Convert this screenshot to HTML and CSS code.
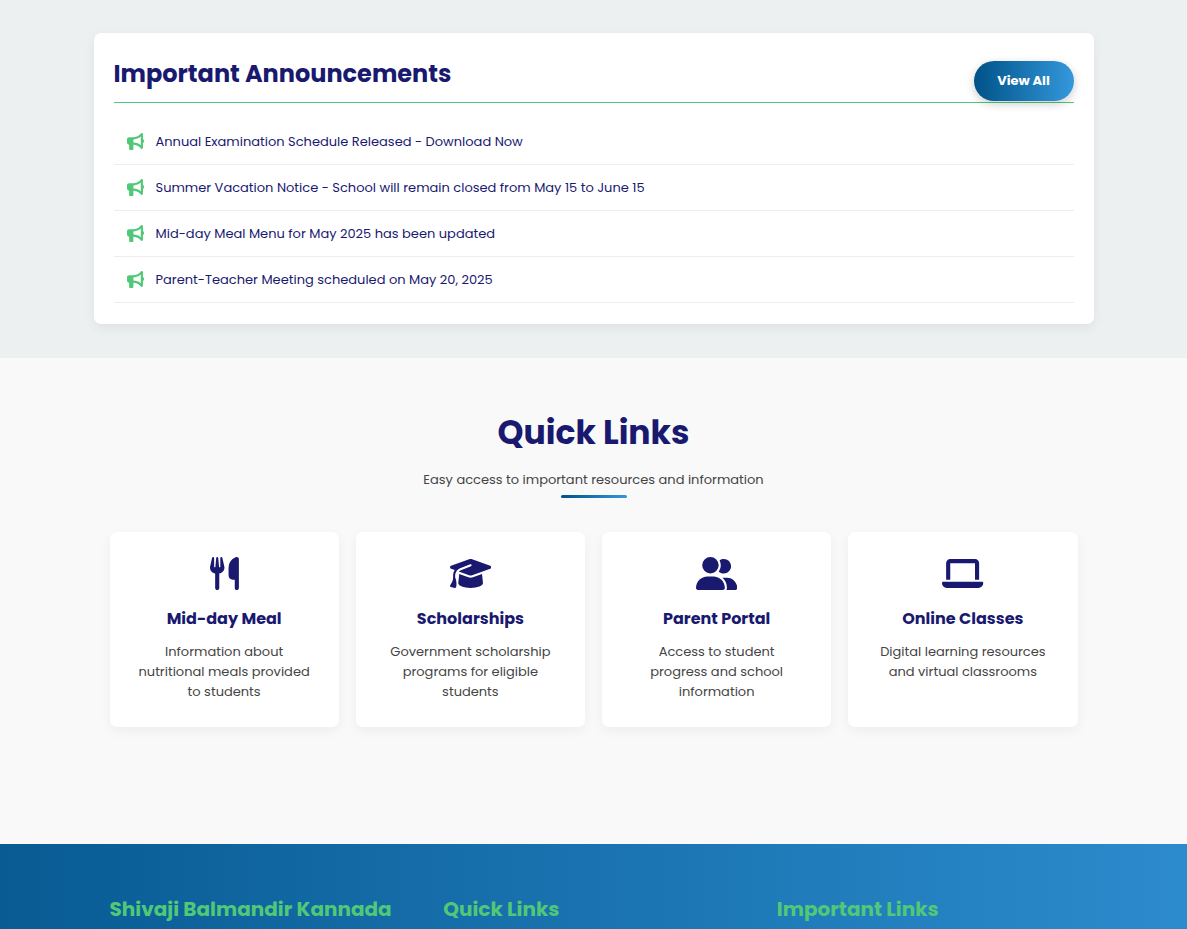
FILE: index.html
```html
<!DOCTYPE html>
<html lang="en">
<head>
<meta charset="utf-8">
<meta name="viewport" content="width=device-width, initial-scale=1">
<title>Shivaji Balmandir Kannada</title>
<link rel="stylesheet" href="styles.css">
</head>
<body>
<svg class="sprite" aria-hidden="true">
  <symbol id="bullhorn" viewBox="0 0 512 512"><path d="M480 32c0-12.9-7.8-24.6-19.8-29.6s-25.7-2.2-34.9 6.9L381.7 53c-48 48-113.1 75-181 75H192 160 64c-35.3 0-64 28.7-64 64v96c0 35.3 28.7 64 64 64l0 128c0 17.7 14.3 32 32 32h64c17.7 0 32-14.3 32-32V352l8.7 0c67.9 0 133 27 181 75l43.6 43.6c9.2 9.2 22.9 11.9 34.9 6.9s19.8-16.6 19.8-29.6V300.4c18.6-8.8 32-32.5 32-60.4s-13.4-51.6-32-60.4V32zm-64 76.7V240 371.3C357.2 317.8 280.5 288 200.7 288H192V192h8.7c79.8 0 156.5-29.8 215.3-83.3z"/></symbol>
</svg>
<section class="announcements">
  <div class="board">
    <header class="board-head">
      <h2 class="board-title">Important Announcements</h2>
      <a class="button" href="#all">View All</a>
    </header>
    <ul class="notices">
      <li class="notice"><svg class="notice-icon" aria-hidden="true"><use href="#bullhorn"/></svg><a class="notice-link" href="#exam">Annual Examination Schedule Released - Download Now</a></li>
      <li class="notice"><svg class="notice-icon" aria-hidden="true"><use href="#bullhorn"/></svg><a class="notice-link" href="#vacation">Summer Vacation Notice - School will remain closed from May 15 to June 15</a></li>
      <li class="notice"><svg class="notice-icon" aria-hidden="true"><use href="#bullhorn"/></svg><a class="notice-link" href="#menu">Mid-day Meal Menu for May 2025 has been updated</a></li>
      <li class="notice"><svg class="notice-icon" aria-hidden="true"><use href="#bullhorn"/></svg><a class="notice-link" href="#meeting">Parent-Teacher Meeting scheduled on May 20, 2025</a></li>
    </ul>
  </div>
</section>
<section class="quick">
  <div class="container">
    <header class="quick-head">
      <h2 class="quick-title">Quick Links</h2>
      <p class="quick-lead">Easy access to important resources and information</p>
    </header>
    <div class="cards">
      <a class="card" href="#meal">
        <svg class="card-icon" viewBox="0 0 448 512" aria-hidden="true"><path d="M416 0C400 0 288 32 288 176V288c0 35.3 28.7 64 64 64h32V480c0 17.7 14.3 32 32 32s32-14.3 32-32V352 240 32c0-17.7-14.3-32-32-32zM64 16C64 7.8 57.9 1 49.7 .1S34.2 4.6 32.4 12.5L2.1 148.8C.7 155.1 0 161.5 0 167.9c0 45.9 35.1 83.6 80 87.7V480c0 17.7 14.3 32 32 32s32-14.3 32-32V255.6c44.9-4.1 80-41.8 80-87.7c0-6.4-.7-12.8-2.1-19.1L191.6 12.5c-1.8-8-9.3-13.3-17.4-12.4S160 7.8 160 16V150.2c0 5.4-4.4 9.8-9.8 9.8c-5.1 0-9.3-3.9-9.8-9L127.9 14.6C127.2 6.3 120.3 0 112 0s-15.2 6.3-15.9 14.6L83.7 151c-.5 5.1-4.7 9-9.8 9c-5.4 0-9.8-4.4-9.8-9.8V16z"/></svg>
        <h3 class="card-title">Mid-day Meal</h3>
        <p class="card-text">Information about nutritional meals provided to students</p>
      </a>
      <a class="card" href="#scholarships">
        <svg class="card-icon" viewBox="0 0 640 512" aria-hidden="true"><path d="M320 32c-8.1 0-16.1 1.4-23.7 4.1L15.8 137.4C6.3 140.9 0 149.9 0 160s6.3 19.1 15.8 22.6l57.9 20.9C57.3 229.3 48 259.8 48 291.9v28.1c0 28.4-10.8 57.7-22.3 80.8c-6.5 13-13.9 25.8-22.5 37.6C0 442.7-.9 448.3 .9 453.4s6 8.9 11.2 10.2l64 16c4.2 1.1 8.7 .3 12.4-2s6.3-6.1 7.1-10.4c8.6-42.8 4.3-81.2-2.1-108.7C90.3 344.3 86 329.8 80 316.5V291.9c0-30.2 10.2-58.7 27.9-81.5c12.9-15.5 29.6-28 49.2-35.7l157-61.7c8.2-3.2 17.5 .8 20.7 9s-.8 17.5-9 20.7l-157 61.7c-12.4 4.9-23.3 12.4-32.2 21.6l159.6 57.6c7.6 2.7 15.6 4.1 23.7 4.1s16.1-1.4 23.7-4.1L624.2 182.6c9.5-3.4 15.8-12.5 15.8-22.6s-6.3-19.1-15.8-22.6L343.7 36.1C336.1 33.4 328.1 32 320 32zM128 408c0 35.3 86 72 192 72s192-36.7 192-72L496.7 262.6 354.5 314c-11.1 4-22.8 6-34.5 6s-23.5-2-34.5-6L143.3 262.6 128 408z"/></svg>
        <h3 class="card-title">Scholarships</h3>
        <p class="card-text">Government scholarship programs for eligible students</p>
      </a>
      <a class="card" href="#parents">
        <svg class="card-icon" viewBox="0 0 640 512" aria-hidden="true"><path d="M96 128a128 128 0 1 1 256 0A128 128 0 1 1 96 128zM0 482.3C0 383.8 79.8 304 178.3 304h91.4C368.2 304 448 383.8 448 482.3c0 16.4-13.3 29.7-29.7 29.7H29.7C13.3 512 0 498.7 0 482.3zM609.3 512H471.4c5.4-9.4 8.6-20.3 8.6-32v-8c0-60.7-27.1-115.2-69.8-151.8c2.4-.1 4.7-.2 7.1-.2h61.4C567.8 320 640 392.2 640 481.3c0 17-13.8 30.7-30.7 30.7zM432 256c-31 0-59-12.6-79.3-32.9C372.4 196.5 384 163.6 384 128c0-26.8-6.6-52.1-18.3-74.3C384.3 40.1 407.2 32 432 32c61.9 0 112 50.1 112 112s-50.1 112-112 112z"/></svg>
        <h3 class="card-title">Parent Portal</h3>
        <p class="card-text">Access to student progress and school information</p>
      </a>
      <a class="card" href="#classes">
        <svg class="card-icon" viewBox="0 0 640 512" aria-hidden="true"><path d="M128 32C92.7 32 64 60.7 64 96V352h64V96H512V352h64V96c0-35.3-28.7-64-64-64H128zM19.2 384C8.6 384 0 392.6 0 403.2C0 445.6 34.4 480 76.8 480H563.2c42.4 0 76.8-34.4 76.8-76.8c0-10.6-8.6-19.2-19.2-19.2H19.2z"/></svg>
        <h3 class="card-title">Online Classes</h3>
        <p class="card-text">Digital learning resources and virtual classrooms</p>
      </a>
    </div>
  </div>
</section>
<footer class="footer">
  <div class="container footer-columns">
    <h3 class="footer-title">Shivaji Balmandir Kannada</h3>
    <h3 class="footer-title">Quick Links</h3>
    <h3 class="footer-title">Important Links</h3>
  </div>
</footer>
</body>
</html>
```
FILE: styles.css
```css
:root {
  --navy: #191970;
  --green: #50c878;
  --blue-dark: #005288;
  --blue: #3498db;
}
* { box-sizing: border-box; margin: 0; padding: 0; }
body {
  font-family: Poppins, Inter, sans-serif;
  font-size: 13px;
  line-height: 20px;
  color: #444;
  background: #f9f9f9;
}
a { color: inherit; text-decoration: none; }
.sprite { display: none; }
.container { max-width: 1000px; margin: 0 auto; padding: 0 16px; }

.announcements { padding: 33px 16px 34px; background: #ecf0f1; }
.board {
  max-width: 1000px;
  margin: 0 auto;
  padding: 20px 20px 21px;
  background: #fff;
  border-radius: 7px;
  box-shadow: 0 4px 12px rgba(0, 0, 0, .06);
}
.board-head {
  display: flex;
  justify-content: space-between;
  align-items: flex-end;
  height: 50px;
  padding-bottom: 1px;
  border-bottom: 1px solid var(--green);
}
.board-title { align-self: flex-start; font-size: 24px; line-height: 42px; color: var(--navy); }
.button {
  min-width: 100px;
  padding: 10px 20px;
  border-radius: 20px;
  background: linear-gradient(90deg, var(--blue-dark), var(--blue));
  box-shadow: 0 3px 10px rgba(0, 0, 0, .2);
  color: #fff;
  font-weight: 700;
  text-align: center;
}
.notices { margin-top: 16px; list-style: none; }
.notice {
  display: flex;
  align-items: center;
  gap: 12px;
  height: 46px;
  padding: 0 13px;
  border-bottom: 1px solid #eee;
}
.notice-icon { width: 17px; height: 17px; fill: var(--green); }
.notice-link { color: var(--navy); }

.quick { padding: 50px 0 117px; }
.quick-head { text-align: center; }
.quick-title { font-size: 33px; line-height: 50px; color: var(--navy); }
.quick-lead { margin-top: 12px; }
.quick-head::after {
  content: "";
  display: block;
  width: 66px;
  height: 3px;
  margin: 5px auto 34px;
  border-radius: 2px;
  background: linear-gradient(90deg, var(--blue-dark), var(--blue));
}
.cards { display: grid; grid-template-columns: repeat(4, 1fr); gap: 17px; }
.card {
  padding: 25px 27px;
  border-radius: 7px;
  background: #fff;
  box-shadow: 0 4px 12px rgba(0, 0, 0, .05);
  text-align: center;
}
.card-icon { display: block; height: 33px; margin: 0 auto; fill: var(--navy); }
.card-title { margin: 17px 0 12px; font-size: 16px; line-height: 23px; color: var(--navy); }

.footer { padding: 50px 0 5px; background: linear-gradient(90deg, #085b93, #2c8bcd); }
.footer-columns { display: grid; grid-template-columns: repeat(3, 1fr); gap: 33px; }
.footer-title { font-size: 20px; line-height: 30px; color: var(--green); white-space: nowrap; }
```
